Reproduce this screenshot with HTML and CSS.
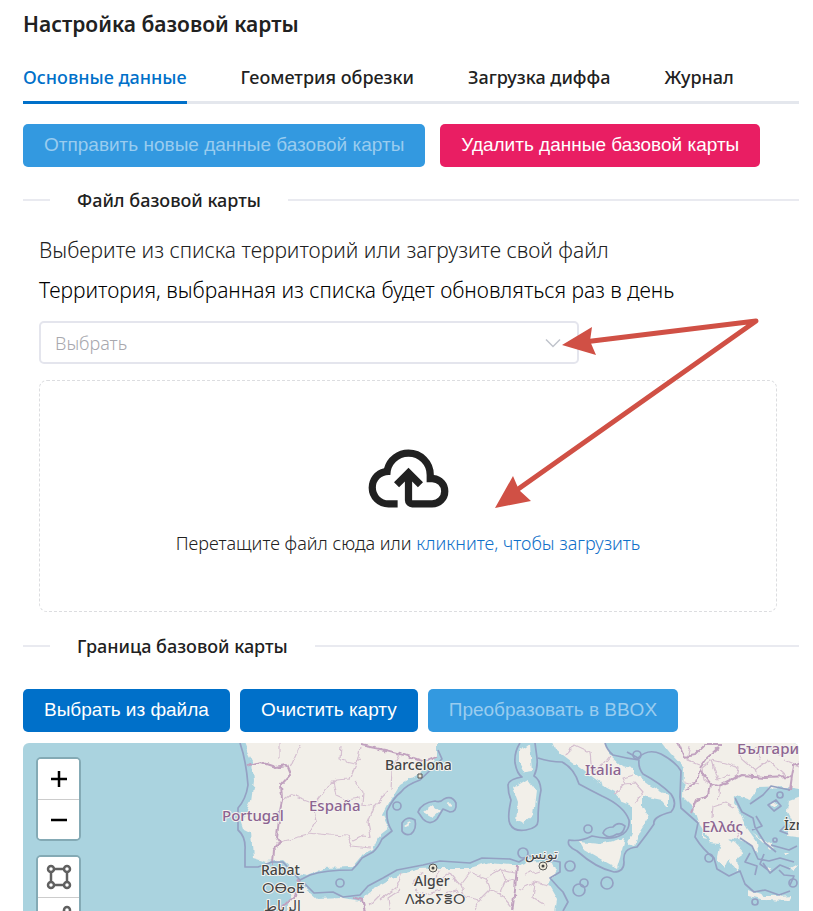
FILE: index.html
```html
<!DOCTYPE html>
<html lang="ru">
<head>
<meta charset="utf-8">
<meta name="viewport" content="width=device-width, initial-scale=1">
<title>Настройка базовой карты</title>
<link rel="stylesheet" href="styles.css">
</head>
<body>
<main class="page">
  <h1 class="title">Настройка базовой карты</h1>
  <nav class="tabs">
    <a class="tab tab-active" href="#main">Основные данные</a>
    <a class="tab" href="#crop">Геометрия обрезки</a>
    <a class="tab" href="#diff">Загрузка диффа</a>
    <a class="tab" href="#log">Журнал</a>
  </nav>
  <div class="actions actions-wide">
    <button class="btn btn-primary" type="button" disabled>Отправить новые данные базовой карты</button>
    <button class="btn btn-danger" type="button">Удалить данные базовой карты</button>
  </div>
  <h2 class="divider">Файл базовой карты</h2>
  <section class="source">
    <label class="lead" for="territory">Выберите из списка территорий или загрузите свой файл</label>
    <p class="lead lead-strong">Территория, выбранная из списка будет обновляться раз в день</p>
    <div class="inputs">
      <div class="select-wrap">
        <select class="select" id="territory"><option>Выбрать</option></select>
        <svg class="chevron" viewBox="0 0 16 10" aria-hidden="true"><path d="M1 1.500l7 7 7-7"/></svg>
      </div>
      <div class="dropzone">
        <svg class="cloud" viewBox="0 0 24 24" aria-hidden="true"><path d="M6.5 20Q4.22 20 2.610 18.430 1 16.850 1 14.580 1 12.630 2.170 11.100 3.350 9.570 5.250 9.150 5.880 6.850 7.750 5.430 9.630 4 12 4 14.930 4 16.960 6.040 19 8.070 19 11 20.730 11.200 21.860 12.500 23 13.780 23 15.500 23 17.380 21.690 18.690 20.380 20 18.500 20H13Q12.180 20 11.590 19.410 11 18.830 11 18V12.850L9.400 14.400 8 13 12 9 16 13 14.600 14.400 13 12.850V18H18.500Q19.550 18 20.270 17.270 21 16.550 21 15.500 21 14.450 20.270 13.730 19.550 13 18.500 13H17V11Q17 8.930 15.540 7.460 14.080 6 12 6 9.930 6 8.460 7.460 7 8.930 7 11H6.500Q5.050 11 4.030 12.030 3 13.050 3 14.500 3 15.950 4.030 17 5.050 18 6.500 18H9V20Z"/></svg>
        <p class="drop-text">Перетащите файл сюда или <a href="#upload">кликните, чтобы загрузить</a></p>
      </div>
      <svg class="arrows" viewBox="0 0 740 200" aria-hidden="true">
        <path class="shaft" d="M545 21L717 0L475 171"/>
        <path class="head" d="M523 24L553 6L551 20L557 34Z"/>
        <path class="head" d="M456 187L474 155L480 169L492 180Z"/>
      </svg>
    </div>
  </section>
  <h2 class="divider">Граница базовой карты</h2>
  <div class="actions">
    <button class="btn btn-primary" type="button">Выбрать из файла</button>
    <button class="btn btn-primary" type="button">Очистить карту</button>
    <button class="btn btn-primary" type="button" disabled>Преобразовать в BBOX</button>
  </div>
  <div class="map">
    <svg class="map-canvas" viewBox="23 743 776 168" preserveAspectRatio="xMinYMin slice" role="img" aria-label="Карта">
      <defs>
        <filter id="rough" x="-5%" y="-5%" width="110%" height="110%">
          <feTurbulence type="fractalNoise" baseFrequency="0.12" numOctaves="2" seed="4" result="n"/>
          <feDisplacementMap in="SourceGraphic" in2="n" scale="6" xChannelSelector="R" yChannelSelector="G"/>
        </filter>
      </defs>
      <g class="land" filter="url(#rough)">
        <path d="M240 735L246 750 252 762 254 780 251 802 241 822 243 828 251 832 253 858 267 862 283 860 297 873 307 875 323 868 353 867 363 855 373 850 380 835 389 828 383 815 390 802 400 785 417 775 433 764 437 755 437 735Z"/>
        <path d="M284 920L292 892 303 887 317 899 343 898 360 901 368 892 385 883 397 875 420 869 440 868 470 868 490 862 520 865 530 861 553 862 556 870 548 884 557 900 554 920Z"/>
        <path d="M519 751L526 747 530 744 532 772 525 773 519 763Z"/>
        <path d="M513 788L528 779 536 790 533 815 523 824 516 821 518 802Z"/>
        <path d="M423 812L432 805 440 812 433 818ZM447 803L453 804 450 807ZM405 825L410 822 408 827Z"/>
        <path d="M550 735L556 749 563 755 580 768 593 778 607 788 617 793 622 803 632 807 632 832 628 843 635 845 640 832 649 818 642 807 642 796 662 800 669 808 669 796 650 785 634 773 632 768 622 766 610 755 603 735Z"/>
        <path d="M579 842L600 844 625 838 620 858 617 868 604 861 583 849Z"/>
        <path d="M656 735L672 755 684 768 683 798 695 810 700 825 711 842 720 843 717 858 725 868 729 860 738 872 737 858 744 853 735 843 727 838 748 842 758 853 757 842 747 828 741 815 734 804 735 795 750 800 757 788 787 787 805 790 805 735Z"/>
        <path d="M805 795L789 801 788 812 792 820 788 836 805 838Z"/>
        <path d="M748 890L755 893 765 896 780 896 792 895 789 901 765 900 748 896ZM752 832L775 848 772 850ZM769 803L779 802 774 807ZM768 868L772 869 770 873ZM783 853L790 852 786 856ZM790 868L797 864 794 871ZM702 832L706 840 702 839Z"/>
      </g>
      <g class="region" filter="url(#rough)">
        <path d="M280 743L280 758M290 767L300 745M282 801L290 795 312 803M315 803L327 787 336 780 350 779 357 762 360 748M333 780L336 795 347 800 360 798M355 782L363 792 362 805 374 807M374 807L388 792M391 790L392 770 400 755M312 803L316 820 308 835 276 843M308 833L330 835 347 836 352 846 371 848M352 840L362 835 371 836 368 822 374 807M341 745L340 760 355 763 360 760"/>
        <path d="M565 755L575 745 590 752 592 772M592 772L603 765 610 756M615 793L625 784 622 778 633 775M625 784L635 783 643 792 635 803M380 900L396 888 402 872M390 911L388 898 400 890M370 905L380 895M412 885L420 873 432 880 440 870M440 880L450 873 460 885 470 872 485 878 500 870 515 873M460 885L465 897 480 900 475 911M485 878L490 890 480 900M500 870L505 882 515 880M490 890L500 893 505 882M500 893L510 905 515 911M520 890L535 882 548 885M525 875L540 870M535 882L533 898 545 905M440 895L455 890 465 897M415 890L425 895 440 890 438 880"/>
        <path d="M690 745L687 760 700 765M684 782L700 785M702 768L712 760 725 763 738 768 736 778 725 785M702 768L704 780 715 786M712 760L718 780 730 775M738 755L755 770 768 760 785 775M743 750L758 748 762 760M755 770L758 778M767 745L780 755 799 750M712 818L713 807 725 803 733 808M720 786L718 800M735 840L741 828M785 760L799 766"/>
      </g>
      <g class="border" filter="url(#rough)">
        <path d="M246 766L260 762 275 767 286 765 290 775 281 785 282 800 278 820 276 836 280 842 273 850 272 865M360 745L385 750 405 755 425 762 437 757M517 865L515 890 512 911M352 897L362 900 365 911M300 880L295 895 280 911"/>
        <path d="M685 790L694 785 700 770 712 785 720 786 742 775 765 777 792 776M692 812L697 800 708 795 710 784M700 768L707 758 718 748M675 735L684 757 695 755 705 745 722 745M792 776L790 790M792 776L794 765 799 762"/>
      </g>
      <g class="water">
        <path d="M240 743Q246 760 248 785Q246 799 238 808L238 830Q246 837 245 850L245 867 258 867 272 862 283 862 300 880 310 875Q325 870 352 870Q358 864 362 858L373 852Q378 848 382 839L392 831Q386 822 387 811Q393 798 401 792Q406 785 420 780L442 759 438 750"/>
        <path d="M304 883L314 893 333 892 343 897 360 895 368 886 383 878 397 870 423 865 440 861 470 863 482 858 510 859 519 862 529 856 545 859 560 862 560 872 550 878 558 887 563 892 568 902 563 911"/>
        <path d="M520 743Q514 752 515 763Q517 774 522 777Q509 779 508 785Q508 793 511 800Q507 818 510 824Q514 832 526 830Q538 828 538 821Q538 804 541 790Q540 779 534 776Q538 768 537 758L535 743"/>
        <path d="M418 812Q421 803 435 801Q440 803 444 799Q452 795 456 803Q457 812 450 812L443 809 437 819Q430 826 423 819Z"/>
        <path d="M402 823Q407 815 415 820Q417 829 411 834Q405 836 402 831Z"/>
        <path d="M538 758Q550 762 562 762Q574 768 579 784Q590 790 602 796Q624 806 629 820Q630 829 623 834Q612 841 592 836Q580 842 569 840Q566 846 577 851Q596 868 614 872Q624 872 624 862Q622 848 637 847Q648 833 654 824Q652 817 671 812Q678 804 671 794Q660 783 643 774Q638 768 639 760Q625 758 613 755Q607 750 605 743"/>
        <path d="M603 833Q605 827 613 827Q618 821 625 826Q623 835 617 834Q608 840 603 833Z"/>
        <path d="M627 752L638 758Q648 748 661 754Q676 762 681 771L680 797 681 808 698 823 695 837Q703 850 714 858L717 869 729 876 740 871 745 884 754 892 765 890 779 895 790 891M740 838L752 846 758 859 769 861 780 858 794 862M735 798L742 812 753 818 755 827 765 843 776 852M750 804L763 795 771 786 790 790M756 816L762 826 752 830M750 853L745 862 757 866 755 875M763 863L770 873 780 865 790 869M771 845L789 850 797 846M788 834L780 831 787 824M768 805L776 800 781 806 774 811ZM779 870L784 875 794 876 790 885M764 854L760 864 768 870"/>
        <circle cx="397" cy="806" r="4"/><circle cx="340" cy="883" r="4"/><circle cx="523" cy="853" r="5"/><circle cx="588" cy="829" r="4"/><circle cx="570" cy="866" r="5"/><circle cx="579" cy="890" r="6"/><circle cx="584" cy="883" r="4"/><circle cx="607" cy="883" r="6"/><circle cx="637" cy="755" r="4"/><circle cx="709" cy="858" r="4"/><circle cx="780" cy="795" r="3"/><circle cx="775" cy="840" r="2"/><circle cx="793" cy="883" r="4"/><circle cx="755" cy="902" r="3"/>
      </g>
      <g class="label country">
        <text x="222" y="821">Portugal</text><text x="309" y="811">España</text><text x="585" y="775">Italia</text><text x="702" y="832">Ελλάς</text><text x="737" y="754">България</text>
      </g>
      <g class="label city">
        <text x="385" y="770">Barcelona</text><text x="261" y="875">Rabat</text><text x="262" y="893">ⵔⴱⴰⵟ</text><text x="264" y="911">الرباط</text><text x="414" y="886">Alger</text><text x="405" y="904">ⴷⵣⴰⵢⴻⵔ</text><text x="525" y="859">تونس</text><text x="784" y="830">İzmir</text>
      </g>
      <g class="dot"><circle cx="433" cy="868" r="4"/><circle cx="543" cy="866" r="4"/><path d="M418 774h4v4h-4z"/></g>
      <g class="dot-core"><circle cx="433" cy="868" r="1.500"/><circle cx="543" cy="866" r="1.500"/></g>
    </svg>
    <div class="controls">
      <div class="control-group">
        <button class="control" type="button" aria-label="Приблизить"><svg class="zoom-icon" viewBox="0 0 18 18"><path d="M1 9h16M9 1v16"/></svg></button>
        <button class="control" type="button" aria-label="Отдалить"><svg class="zoom-icon" viewBox="0 0 18 18"><path d="M1 9h16"/></svg></button>
      </div>
      <div class="control-group">
        <button class="control" type="button" aria-label="Прямоугольник"><svg class="draw-icon" viewBox="0 0 26 26"><path d="M5 5h16v16H5z"/><circle cx="5" cy="5" r="3"/><circle cx="21" cy="5" r="3"/><circle cx="5" cy="21" r="3"/><circle cx="21" cy="21" r="3"/></svg></button>
        <button class="control" type="button" aria-label="Многоугольник"><svg class="draw-icon" viewBox="0 0 26 26"><path d="M21 5L5 13l14 8z"/><circle cx="21" cy="5" r="3"/><circle cx="5" cy="13" r="3"/><circle cx="19" cy="21" r="3"/></svg></button>
      </div>
    </div>
  </div>
</main>
</body>
</html>
```
FILE: styles.css
```css
* { box-sizing: border-box; }
body { margin: 0; background: #fff; color: #212121; font-family: "Noto Sans", "Open Sans", sans-serif; }
.page { display: flex; flex-direction: column; min-height: 100vh; padding: 8px 14px 0 23px; }
.title { margin: 0; font-size: 21px; line-height: 32px; font-weight: 600; }
.tabs { display: flex; gap: 54px; height: 64px; border-bottom: 3px solid #e4e7ed; align-items: stretch; }
.tab { margin-bottom: -3px; padding-top: 24px; border-bottom: 3px solid transparent; color: #212121; font-size: 18px; line-height: 26px; font-weight: 500; text-decoration: none; white-space: nowrap; }
.tab-active { border-color: #0070c9; color: #0070c9; }
.actions { display: flex; gap: 10px; }
.actions-wide { gap: 15px; margin-top: 20px; }
.btn { height: 43px; padding: 0 21px 2px; border: 0; border-radius: 5px; color: #fff; font-family: "Liberation Sans", Arial, sans-serif; font-size: 19px; white-space: nowrap; }
.btn-primary { background: #0070c9; }
.btn-primary:disabled { background: #3399e0; color: #99ccef; }
.btn-danger { background: #e91e63; }
.divider { display: flex; align-items: center; gap: 27px; margin: 20px 0 0; font-size: 18px; line-height: 26px; font-weight: 500; }
.divider::before, .divider::after { content: ""; height: 2px; background: #e9eaf0; }
.divider::before { width: 27px; }
.divider::after { flex: 1; }
.source { padding: 17px 22px 0 16px; }
.lead { display: block; margin: 0; font-weight: 340; font-size: 21px; line-height: 40px; }
.lead-strong { color: #000; }
.inputs { position: relative; margin-top: 11px; }
.select-wrap { position: relative; max-width: 540px; }
.select { appearance: none; width: 100%; height: 43px; padding: 0 14px; border: 2px solid #e4e5ed; border-radius: 5px; background: #fff; color: #a8a8ae; font: 340 18px "Noto Sans", "Open Sans", sans-serif; }
.chevron { position: absolute; right: 18px; top: 17px; width: 16px; height: 10px; fill: none; stroke: #c0c4cc; stroke-width: 1.5; pointer-events: none; }
.dropzone { display: flex; flex-direction: column; align-items: center; height: 232px; margin-top: 16px; padding-top: 54px; border: 1px dashed #dcdde0; border-radius: 8px; }
.cloud { width: 87px; height: 87px; fill: #212121; }
.drop-text { margin: 8px 0 0; font-weight: 360; font-size: 18px; line-height: 26px; }
.drop-text a { color: #0f70c9; text-decoration: none; }
.arrows { position: absolute; left: 0; top: 0; width: 740px; height: 200px; overflow: visible; pointer-events: none; }
.shaft { fill: none; stroke: #d05045; stroke-width: 5; stroke-linecap: round; stroke-linejoin: round; }
.head { fill: #d05045; }
.source + .divider { margin: 21px 0 30px; }
.map { position: relative; flex: 1; min-height: 168px; margin-top: 11px; border-radius: 6px 6px 0 0; overflow: hidden; background: #aad3df; }
.map-canvas { position: absolute; left: 0; top: 0; width: 100%; height: 100%; }
.land { fill: #f2efe9; }
.region, .border, .water { fill: none; stroke-linejoin: round; }
.region { stroke: #d5bfd0; stroke-width: 1.2; }
.border { stroke: #c1a2bf; stroke-width: 2; }
.water { stroke: #94a1c3; stroke-width: 1.7; }
.label { font-family: "Noto Sans", "DejaVu Sans", sans-serif; font-weight: 500; paint-order: stroke; stroke: #f5f3ef; stroke-width: 2px; stroke-linejoin: round; }
.country { fill: #8c6491; font-size: 15px; }
.city { fill: #444; font-size: 14px; }
.dot { fill: #eee9d8; stroke: #555; stroke-width: 1; }
.dot-core { fill: #444; }
.controls { position: absolute; left: 13px; top: 14px; display: grid; gap: 14px; }
.control-group { width: 45px; border: 2px solid #84aab5; border-radius: 5px; overflow: hidden; background: #fff; }
.control { display: flex; align-items: center; justify-content: center; width: 100%; height: 40px; padding: 0; border: 0; background: #fff; }
.control + .control { border-top: 1px solid #ccc; }
.zoom-icon { width: 18px; height: 18px; stroke: #000; stroke-width: 2.5; }
.draw-icon { width: 26px; height: 26px; fill: #fff; stroke: #606060; stroke-width: 2.500; }
```
